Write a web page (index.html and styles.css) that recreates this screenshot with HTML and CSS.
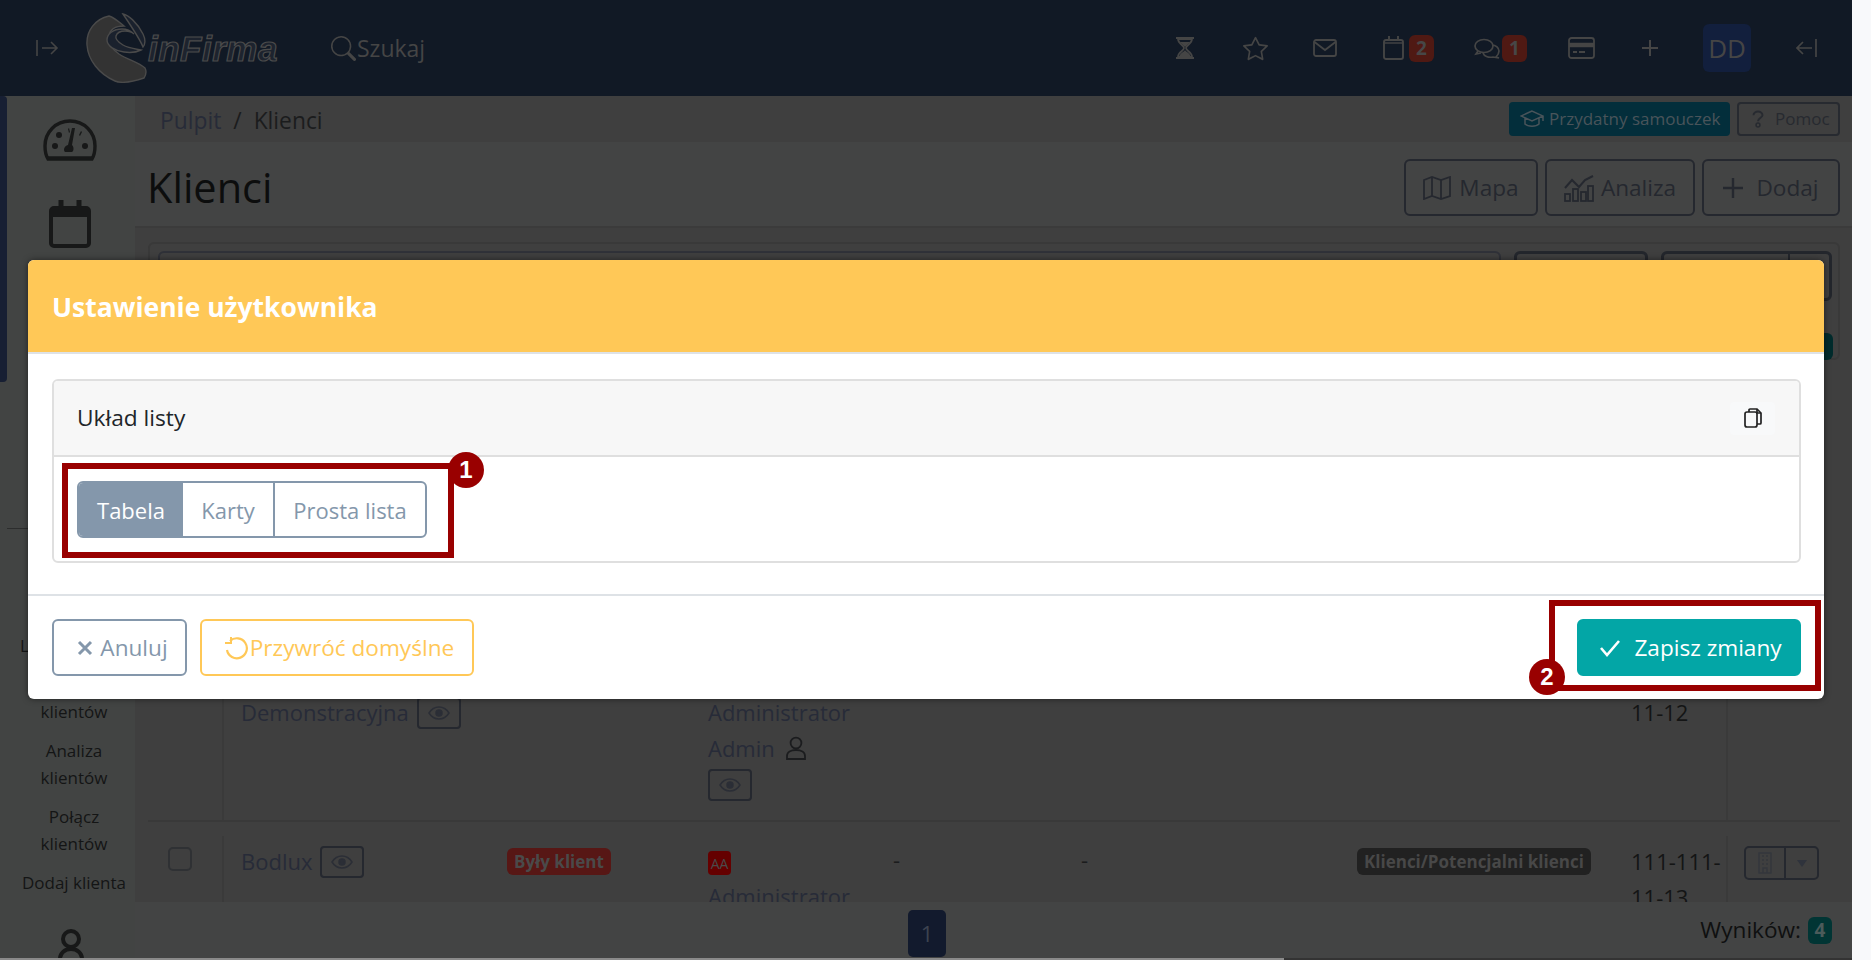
FILE: index.html
```html
<!DOCTYPE html>
<html lang="pl">
<head>
    <meta charset="UTF-8">
    <title>Klienci - inFirma</title>
    <link rel="stylesheet" href="styles.css">
</head>
<body>
<div class="page">
    <div class="app">
        <header class="navbar">
            <svg class="nav-toggle" viewBox="0 0 24 18" fill="none" stroke="currentColor" stroke-width="1.6"><path d="M2 1v16M7 9h15M16 3l6 6-6 6"/></svg>
            <div class="logo">
                <svg class="logo-swoosh" viewBox="0 0 64 70">
                    <path d="M38 1c5 1 14 8 20 20 3 6 2 11 0 13-3-8-10-18-20-33z" fill="#1a212d" stroke="#4a4a4a" stroke-width="1.4"/>
                    <path d="M24 3C10 6 1 18 2 32c1 15 12 29 28 36 7 3 17 1 29-3 2-3 3-6 1-10-7-6-17-8-26-14-7-5-12-11-10-18 1-7 7-10 15-10C34 9 30 5 24 3z" fill="#333" stroke="#4a4a4a" stroke-width="1.4"/>
                    <path d="M37 16c-9 0-15 5-15 11 0 6 8 11 17 12 7 1 13 0 17-2-5-1-13-2-18-5-5-3-8-6-7-9 1-3 4-5 9-5 4 0 7 1 9 3-3-3-7-5-12-5z" fill="#1a212d" stroke="#4a4a4a" stroke-width="1.4"/>
                </svg>
                <span class="logo-text">inFirma</span>
            </div>
            <div class="nav-search">
                <svg width="25" height="25" viewBox="0 0 16 16" fill="currentColor"><path d="M11.742 10.344a6.5 6.5 0 1 0-1.397 1.398h-.001c.03.04.062.078.098.115l3.85 3.85a1 1 0 0 0 1.415-1.414l-3.85-3.85a1.007 1.007 0 0 0-.115-.1zM12 6.5a5.5 5.5 0 1 1-11 0 5.5 5.5 0 0 1 11 0z"/></svg>
                <span>Szukaj</span>
            </div>
            <div class="nav-icons">
                <svg class="ni ni-hour" viewBox="0 0 18 24"><path d="M0 1h18v2H0zM0 21h18v2H0z" fill="currentColor"/><path d="M2 3c0 5 6 6 6 9s-6 4-6 9h14c0-5-6-6-6-9s6-4 6-9z" fill="none" stroke="currentColor" stroke-width="1.8"/><path d="M4 6h10l-5 5zM3 21c1-4 5-5 6-7 1 2 5 3 6 7z" fill="currentColor"/></svg>
                <svg class="ni ni-star" viewBox="0 0 16 16" fill="currentColor"><path d="M2.866 14.85c-.078.444.36.791.746.593l4.39-2.256 4.389 2.256c.386.198.824-.149.746-.592l-.83-4.73 3.522-3.356c.33-.314.16-.888-.282-.95l-4.898-.696L8.465.792a.513.513 0 0 0-.927 0L5.354 5.12l-4.898.696c-.441.062-.612.636-.283.95l3.523 3.356-.83 4.73zm4.905-2.767-3.686 1.894.694-3.957a.565.565 0 0 0-.163-.505L1.71 6.745l4.052-.576a.525.525 0 0 0 .393-.288L8 2.223l1.847 3.658a.525.525 0 0 0 .393.288l4.052.575-2.906 2.77a.565.565 0 0 0-.163.506l.694 3.957-3.686-1.894a.503.503 0 0 0-.461 0z"/></svg>
                <svg class="ni ni-mail" viewBox="0 0 24 18" fill="none" stroke="currentColor" stroke-width="1.8"><rect x="1" y="1" width="22" height="16" rx="2"/><path d="M1.5 3l10.5 8 10.5-8"/></svg>
                <div class="ni-badged">
                    <svg class="ni ni-cal" viewBox="0 0 21 24" fill="none" stroke="currentColor" stroke-width="1.9"><rect x="1" y="4" width="19" height="19" rx="2"/><path d="M1 7h19" stroke-width="1.4"/><path d="M6 0v5M15 0v5"/></svg>
                    <span class="nav-badge">2</span>
                </div>
                <div class="ni-badged ni-badged-chat">
                    <svg class="ni ni-chat" viewBox="0 0 27 21" fill="none" stroke="currentColor" stroke-width="1.7"><ellipse cx="10" cy="8" rx="9" ry="6.5"/><path d="M4 13l-2 3 5-1"/><path d="M18 7c4 0 7 3 7 6s-2 5-3 6l3 1-6-1c-5 1-9-1-10-4"/></svg>
                    <span class="nav-badge">1</span>
                </div>
                <svg class="ni ni-card" viewBox="0 0 27 22" fill="none" stroke="currentColor" stroke-width="1.8"><rect x="1" y="1" width="25" height="20" rx="2.5"/><path d="M1 8h25" stroke-width="4.5"/><path d="M5 15h4M11 15h6" stroke-width="2.2"/></svg>
                <svg class="ni ni-plus" viewBox="0 0 18 18" fill="none" stroke="currentColor" stroke-width="2"><path d="M9 1v16M1 9h16"/></svg>
                <div class="avatar">DD</div>
                <svg class="ni ni-back" viewBox="0 0 21 18" fill="none" stroke="currentColor" stroke-width="1.7"><path d="M20 0v18M16 9H1M7 3L1 9l6 6"/></svg>
            </div>
        </header>

        <div class="workspace">
            <aside class="sidebar">
                <div class="side-thumb"></div>
                <div class="side-rail">
                    <svg class="side-gauge" viewBox="0 0 54 42"><path d="M5 40C2 35 2 31 2 27 2 13 13 2 27 2s25 11 25 25c0 4 0 8-3 13z" fill="none" stroke="currentColor" stroke-width="3.4"/><path d="M4 39h46" stroke="currentColor" stroke-width="3.6"/><circle cx="12" cy="27" r="3" fill="currentColor"/><circle cx="16" cy="16" r="3" fill="currentColor"/><circle cx="42" cy="27" r="3" fill="currentColor"/><path d="M25 10l1-1 1 4-1 1zM38 12l1 1-2 4-1-1z" fill="currentColor"/><path d="M32 9l-3 17c2 2 2 6 0 7h-7c-2-2-1-6 3-7l4-17z" fill="currentColor"/></svg>
                    <svg class="side-cal" viewBox="0 0 42 48" fill="none" stroke="currentColor"><rect x="2" y="8" width="38" height="38" rx="3" stroke-width="4"/><path d="M2 13h38" stroke-width="8"/><path d="M12 0v10M30 0v10" stroke-width="5"/></svg>
                    <hr class="side-rule">
                    <nav class="side-links">
                        <a>Lista klientów</a>
                        <a>Grupy<br>klientów</a>
                        <a>Analiza<br>klientów</a>
                        <a>Połącz<br>klientów</a>
                        <a>Dodaj klienta</a>
                    </nav>
                    <svg class="side-user" viewBox="0 0 26 40" fill="none" stroke="currentColor" stroke-width="4"><circle cx="13" cy="10" r="8"/><path d="M2 36v-6c0-6 5-10 11-10s11 4 11 10v6"/></svg>
                </div>
            </aside>

            <main class="main">
                <div class="crumbs">
                    <div class="crumb-path"><a>Pulpit</a><span class="crumb-sep">/</span><span>Klienci</span></div>
                    <a class="btn-tutorial">
                        <svg width="24" height="20" viewBox="0 0 24 20" fill="none" stroke="currentColor" stroke-width="1.5"><path d="M12 2L1 7l11 5 11-5zM5 9v6c3 3 11 3 14 0V9M23 7v5"/></svg>
                        Przydatny samouczek
                    </a>
                    <a class="btn-help">
                        <svg width="12" height="20" viewBox="0 0 16 24" fill="none" stroke="currentColor" stroke-width="2.6"><path d="M2 7c0-3 3-5 6-5s6 2 6 5-6 4-6 8"/><circle cx="8" cy="20" r="2.6" stroke-width="2"/></svg>
                        Pomoc
                    </a>
                </div>

                <div class="titlebar">
                    <h1>Klienci</h1>
                    <div class="title-actions">
                        <a class="btn-line btn-mapa">
                            <svg width="28" height="24" viewBox="0 0 28 24" fill="none" stroke="currentColor" stroke-width="1.8"><path d="M1 4l8-3 9 3 9-3v19l-9 3-9-3-8 3zM9 1v19M18 4v19"/></svg>
                            Mapa
                        </a>
                        <a class="btn-line btn-analiza">
                            <svg width="30" height="28" viewBox="0 0 30 28"><path d="M1 14L8 6l7 7 6-7 8-4" fill="none" stroke="currentColor" stroke-width="2"/><g fill="none" stroke="currentColor" stroke-width="1.8"><rect x="1" y="20" width="5" height="7"/><rect x="9" y="15" width="5" height="12"/><rect x="17" y="18" width="5" height="9"/><rect x="24" y="12" width="5" height="15"/></g></svg>
                            Analiza
                        </a>
                        <a class="btn-line btn-dodaj">
                            <svg width="20" height="20" viewBox="0 0 20 20" fill="none" stroke="currentColor" stroke-width="2.4"><path d="M10 0v20M0 10h20"/></svg>
                            Dodaj
                        </a>
                    </div>
                </div>

                <div class="list-area">
                    <div class="filter-card">
                        <div class="filter-row">
                            <div class="filter-input"></div>
                            <div class="filter-btn"></div>
                            <div class="filter-split"><span></span><span></span></div>
                        </div>
                        <div class="filter-tag"></div>
                    </div>

                    <div class="client-table">
                        <div class="client-row client-row-first">
                            <div></div>
                            <div class="cell-name"><a>Demonstracyjna</a><span class="eye-btn"><svg width="22" height="16" viewBox="0 0 22 16" fill="none" stroke="currentColor" stroke-width="1.5"><path d="M1 8c5-8 15-8 20 0-5 8-15 8-20 0z"/><circle cx="11" cy="8" r="3" fill="currentColor"/></svg></span></div>
                            <div></div>
                            <div class="cell-owner">
                                <a>Administrator</a>
                                <div class="owner-line"><a>Admin</a><svg width="22" height="24" viewBox="0 0 22 24" fill="none" stroke="#1b1c1e" stroke-width="1.8"><circle cx="11" cy="7" r="5.4"/><path d="M2 23v-3c0-4 4-6 9-6s9 2 9 6v3z"/></svg></div>
                                <span class="eye-btn"><svg width="22" height="16" viewBox="0 0 22 16" fill="none" stroke="currentColor" stroke-width="1.5"><path d="M1 8c5-8 15-8 20 0-5 8-15 8-20 0z"/><circle cx="11" cy="8" r="3" fill="currentColor"/></svg></span>
                            </div>
                            <div></div>
                            <div></div>
                            <div></div>
                            <div class="cell-phone">11-12</div>
                            <div></div>
                        </div>
                        <div class="client-row client-row-second">
                            <div><span class="row-check"></span></div>
                            <div class="cell-name"><a>Bodlux</a><span class="eye-btn"><svg width="22" height="16" viewBox="0 0 22 16" fill="none" stroke="currentColor" stroke-width="1.5"><path d="M1 8c5-8 15-8 20 0-5 8-15 8-20 0z"/><circle cx="11" cy="8" r="3" fill="currentColor"/></svg></span></div>
                            <div><span class="tag tag-red">Były klient</span></div>
                            <div class="cell-owner"><span class="tag-aa">AA</span><a>Administrator</a></div>
                            <div class="cell-dash">-</div>
                            <div class="cell-dash">-</div>
                            <div><span class="tag tag-dark">Klienci/Potencjalni klienci</span></div>
                            <div class="cell-phone">111-111-<br>11-13</div>
                            <div>
                                <span class="row-actions">
                                    <span><svg width="14" height="22" viewBox="0 0 14 22" fill="none" stroke="#34373d" stroke-width="1.4"><rect x="1" y="1" width="12" height="20"/><path d="M4 4h2M8 4h2M4 8h2M8 8h2M4 12h2M8 12h2M5 21v-5h4v5"/></svg></span>
                                    <span><i class="caret"></i></span>
                                </span>
                            </div>
                        </div>
                    </div>
                </div>

                <div class="pager">
                    <span class="page-no">1</span>
                    <div class="results">Wyników: <span class="results-count">4</span></div>
                </div>
            </main>
        </div>
        <div class="hscroll"><span></span></div>
    </div>
    <div class="vscroll"></div>

    <section class="modal">
        <div class="modal-head">Ustawienie użytkownika</div>
        <div class="modal-body">
            <div class="panel">
                <div class="panel-head">
                    <span>Układ listy</span>
                    <span class="copy-btn">
                        <svg width="18" height="20" viewBox="0 0 18 20" fill="none" stroke="#222" stroke-width="1.7"><path d="M5 4V2a1 1 0 0 1 1-1h7l4 4v10a1 1 0 0 1-1 1h-3"/><path d="M13 1v4h4"/><rect x="1" y="4" width="12" height="15" rx="2"/></svg>
                    </span>
                </div>
                <div class="panel-body">
                    <div class="layout-group">
                        <span class="layout-opt layout-active">Tabela</span>
                        <span class="layout-opt">Karty</span>
                        <span class="layout-opt">Prosta lista</span>
                    </div>
                </div>
            </div>
        </div>
        <div class="modal-foot">
            <a class="btn btn-cancel">
                <svg width="16" height="16" viewBox="0 0 16 16" fill="none" stroke="currentColor" stroke-width="3"><path d="M2 2l12 12M14 2L2 14"/></svg>
                Anuluj
            </a>
            <a class="btn btn-reset">
                <svg width="24" height="24" viewBox="0 0 24 24" fill="none" stroke="currentColor" stroke-width="2.2"><path d="M6 5a10 10 0 1 1-3 9"/><path d="M7 1v6H1" stroke-width="2"/></svg>
                Przywróć domyślne
            </a>
            <a class="btn btn-save">
                <svg width="22" height="18" viewBox="0 0 22 18" fill="none" stroke="currentColor" stroke-width="2.6"><path d="M2 9l6 7L20 2"/></svg>
                Zapisz zmiany
            </a>
        </div>

        <div class="mark-box mark-box-one"></div>
        <span class="mark-dot mark-dot-one">1</span>
        <div class="mark-box mark-box-two"></div>
        <span class="mark-dot mark-dot-two">2</span>
    </section>
</div>
</body>
</html>
```

FILE: styles.css
```css
:root {
    --nav: #111925;
    --nav-fg: #454545;
    --line-dark: #25282f;
    --link-dark: #272b38;
    --text-dark: #111212;
    --slate: #8497ab;
    --amber: #ffc857;
    --teal: #03a6a6;
    --mark: #990000;
}

* {
    margin: 0;
    padding: 0;
    box-sizing: border-box;
}

html, body {
    height: 100%;
    overflow: hidden;
}

body {
    font-family: "Open Sans", "Noto Sans", sans-serif;
    font-size: 22px;
    line-height: 36px;
    color: var(--text-dark);
}

.page {
    position: relative;
    width: 1871px;
    height: 960px;
    display: flex;
    overflow: hidden;
}

.app {
    width: 1852px;
    display: flex;
    flex-direction: column;
    background: #3f3f3f;
}

.vscroll {
    width: 19px;
    background: #f8f9fb;
}

.hscroll {
    height: 2px;
    background: #333;
}

.hscroll span {
    display: block;
    width: 1284px;
    height: 2px;
    background: #8a8a8a;
}

/* top bar */
.navbar {
    height: 96px;
    flex: none;
    display: flex;
    align-items: center;
    padding-left: 35px;
    background: var(--nav);
    color: var(--nav-fg);
}

.nav-toggle {
    width: 24px;
    height: 18px;
}

.logo {
    display: flex;
    align-items: center;
    margin-left: 26px;
    width: 192px;
    height: 70px;
}

.logo-swoosh {
    width: 64px;
    height: 70px;
    flex: none;
}

.logo-text {
    font-family: "Liberation Sans", sans-serif;
    font-size: 35px;
    font-weight: 700;
    font-style: italic;
    color: #1d232e;
    -webkit-text-stroke: 1.2px #4b4b4b;
    margin-left: -1px;
    margin-top: 1px;
    letter-spacing: 0.5px;
}

.nav-search {
    display: flex;
    align-items: center;
    gap: 1px;
    margin-left: 54px;
    font-size: 23px;
}

.nav-icons {
    margin-left: auto;
    display: flex;
    align-items: center;
    padding-right: 35px;
}

.ni {
    flex: none;
    display: block;
}

.ni-hour { width: 18px; height: 24px; margin-right: 49px; }
.ni-star { width: 25px; height: 25px; margin-right: 45px; }
.ni-mail { width: 24px; height: 18px; margin-right: 46px; }
.ni-cal { width: 21px; height: 24px; }
.ni-chat { width: 27px; height: 21px; }
.ni-card { width: 27px; height: 22px; margin-right: 46px; }
.ni-plus { width: 18px; height: 18px; margin-right: 44px; }
.ni-back { width: 21px; height: 18px; }

.ni-badged {
    display: flex;
    align-items: center;
    gap: 5px;
    margin-right: 40px;
}

.ni-badged-chat {
    gap: 1px;
    margin-right: 41px;
}

.nav-badge {
    width: 25px;
    height: 27px;
    border-radius: 6px;
    background: #4f1913;
    color: #474747;
    font-size: 19px;
    font-weight: 700;
    line-height: 27px;
    text-align: center;
}

.avatar {
    width: 48px;
    height: 48px;
    margin-right: 45px;
    border-radius: 6px;
    background: #121f3d;
    font-size: 26px;
    line-height: 48px;
    text-align: center;
}

/* left rail */
.workspace {
    flex: 1;
    min-height: 0;
    display: flex;
}

.sidebar {
    width: 135px;
    flex: none;
    display: flex;
    background: #424443;
    overflow: hidden;
}

.side-thumb {
    width: 7px;
    height: 286px;
    flex: none;
    border-radius: 0 4px 4px 0;
    background: #171f33;
}

.side-rail {
    flex: 1;
    display: flex;
    flex-direction: column;
    align-items: center;
    padding-top: 23px;
    padding-right: 1px;
    color: #171818;
}

.side-gauge {
    width: 54px;
    height: 42px;
    flex: none;
    margin-right: 2px;
}

.side-cal {
    width: 42px;
    height: 48px;
    flex: none;
    margin-top: 39px;
    margin-right: 2px;
}

.side-rule {
    width: 100%;
    margin-top: 280px;
    border: 0;
    border-top: 1px solid #2c2d2d;
}

.side-links {
    margin: 103px 0 0 7px;
    display: flex;
    flex-direction: column;
    flex: none;
    gap: 12px;
    font-size: 17px;
    line-height: 27px;
    text-align: center;
    color: #141515;
}

.side-user {
    width: 26px;
    height: 40px;
    flex: none;
    margin-top: 33px;
}

/* main column */
.main {
    flex: 1;
    min-width: 0;
    display: flex;
    flex-direction: column;
}

.crumbs {
    height: 46px;
    flex: none;
    display: flex;
    align-items: center;
    padding: 0 12px 0 25px;
    gap: 7px;
    background: #3f3f3f;
}

.crumb-path {
    margin: 3px auto 0 0;
    font-size: 22.8px;
    color: #1b1c1d;
}

.crumb-path a {
    color: var(--link-dark);
}

.crumb-sep {
    margin: 0 12px;
}

.btn-tutorial, .btn-help {
    height: 34px;
    display: flex;
    align-items: center;
    border-radius: 4px;
    font-size: 17px;
    line-height: 30px;
    white-space: nowrap;
}

.btn-tutorial {
    width: 221px;
    padding-left: 11px;
    gap: 5px;
    background: #032e3b;
    color: #49545a;
}

.btn-help {
    width: 103px;
    padding-left: 13px;
    gap: 11px;
    border: 2px solid #272a30;
    color: #272a30;
}

.titlebar {
    height: 86px;
    flex: none;
    display: flex;
    align-items: center;
    justify-content: space-between;
    padding: 0 12px 0 12px;
    background: #434444;
    border-bottom: 2px solid #3b3b3b;
}

h1 {
    margin-top: 5px;
    font-size: 41.5px;
    font-weight: 400;
    line-height: 58px;
    color: #0c0d0d;
}

.title-actions {
    display: flex;
    gap: 7px;
    margin-top: 7px;
}

.btn-line {
    height: 57px;
    display: flex;
    align-items: center;
    justify-content: center;
    border: 2px solid var(--line-dark);
    border-radius: 6px;
    font-size: 22.6px;
    color: var(--line-dark);
}

.btn-mapa { width: 134px; gap: 8px; }
.btn-analiza { width: 150px; gap: 7px; }
.btn-dodaj { width: 138px; gap: 13px; }

.list-area {
    flex: 1;
    min-height: 0;
    display: flex;
    flex-direction: column;
    justify-content: space-between;
    padding: 14px 12px 0 13px;
    overflow: hidden;
}

.filter-card {
    height: 118px;
    padding: 7px 6px 7px 8px;
    border: 2px solid #393939;
    border-radius: 6px;
    position: relative;
}

.filter-row {
    display: flex;
    gap: 13px;
}

.filter-input {
    flex: 1;
    height: 50px;
    border: 2px solid #2f3138;
    border-radius: 6px;
}

.filter-btn {
    width: 134px;
    height: 50px;
    border: 3px solid #23262c;
    border-radius: 6px;
}

.filter-split {
    width: 171px;
    height: 50px;
    display: flex;
    border: 3px solid #23262c;
    border-radius: 6px;
}

.filter-split span:first-child {
    flex: 1;
    border-right: 2px solid #23262c;
}

.filter-split span:last-child {
    width: 39px;
}

/* badge peeking out from under the dialog */
.filter-tag {
    position: absolute;
    top: 89px;
    right: 5px;
    width: 60px;
    height: 27px;
    border-radius: 6px;
    background: #002b2c;
}

.client-table {
    flex: none;
}

.client-row {
    display: grid;
    grid-template-columns: 74px 285px 201px 187px 188px 274px 274px 95px 114px;
    overflow: hidden;
    color: #1b1c1d;
}

.client-row a {
    color: var(--link-dark);
}

.client-row > div:nth-child(2),
.client-row > div:nth-child(9) {
    border-left: 2px solid #3a3a3a;
}

.client-row-first {
    height: 160px;
    padding-top: 32px;
    border-bottom: 2px solid #393939;
}

.client-row-second {
    height: 80px;
    padding-top: 14px;
}

.cell-name {
    display: flex;
    align-items: flex-start;
    gap: 8px;
    padding-left: 17px;
}

.cell-owner {
    display: flex;
    flex-direction: column;
    align-items: flex-start;
}

.owner-line {
    display: flex;
    align-items: center;
    gap: 10px;
}

.eye-btn {
    width: 44px;
    height: 32px;
    display: flex;
    align-items: center;
    justify-content: center;
    flex: none;
    margin-top: 3px;
    border: 2px solid var(--line-dark);
    border-radius: 4px;
    color: #2b2e36;
}

.client-row-second .eye-btn {
    margin-top: 10px;
}

.client-row-second .cell-name a {
    margin-top: 7px;
}

.row-check {
    display: block;
    width: 24px;
    height: 24px;
    margin: 11px 0 0 20px;
    border: 2px solid #2f3134;
    border-radius: 5px;
}

.tag {
    display: inline-block;
    height: 27px;
    padding: 0 7px;
    margin-top: 12px;
    border-radius: 6px;
    font-size: 17px;
    font-weight: 700;
    line-height: 27px;
    white-space: nowrap;
}

.tag-red {
    background: #571715;
    color: #4a4a4a;
}

.tag-dark {
    background: #212121;
    color: #484848;
}

.tag-aa {
    display: block;
    width: 23px;
    height: 24px;
    margin-top: 15px;
    margin-bottom: 3px;
    border-radius: 4px;
    background: #650000;
    color: #4a4a4a;
    font-size: 14px;
    line-height: 26px;
    text-align: center;
}

.cell-dash {
    margin-left: -2px;
    padding-top: 5px;
}

.cell-phone {
    white-space: nowrap;
    padding-top: 0;
    color: #141515;
}

.client-row-second .cell-phone {
    padding-top: 7px;
}

.row-actions {
    display: flex;
    width: 75px;
    height: 34px;
    margin: 10px 0 0 16px;
    border: 2px solid var(--line-dark);
    border-radius: 5px;
}

.row-actions span {
    display: flex;
    align-items: center;
    justify-content: center;
}

.row-actions span:first-child {
    flex: 1;
    border-right: 2px solid var(--line-dark);
}

.row-actions span:last-child {
    width: 31px;
}

.caret {
    border: 5px solid transparent;
    border-top: 7px solid #2f333c;
    margin-top: 6px;
}

.pager {
    height: 56px;
    flex: none;
    display: flex;
    align-items: center;
    justify-content: space-between;
    padding: 0 20px 0 773px;
    background: #434444;
}

.page-no {
    width: 38px;
    height: 47px;
    margin-top: 6px;
    border-radius: 5px;
    background: #121a2d;
    color: #3d4350;
    line-height: 47px;
    text-align: center;
}

.results {
    display: flex;
    align-items: center;
    gap: 7px;
    font-size: 22.6px;
    color: #0f1010;
}

.results-count {
    width: 24px;
    height: 27px;
    border-radius: 6px;
    background: #013534;
    color: #4b5b5a;
    font-size: 19px;
    font-weight: 700;
    line-height: 27px;
    text-align: center;
}

/* dialog */
.modal {
    position: absolute;
    left: 28px;
    top: 260px;
    width: 1796px;
    height: 439px;
    display: flex;
    flex-direction: column;
    border-radius: 6px;
    background: #fff;
    box-shadow: 0 0 6px rgba(0, 0, 0, 0.5);
    color: #212529;
}

.modal-head {
    height: 94px;
    flex: none;
    padding: 2px 0 0 24px;
    border-radius: 6px 6px 0 0;
    border-bottom: 2px solid #dee2e6;
    background: var(--amber);
    color: #fff;
    font-size: 26.5px;
    font-weight: 700;
    line-height: 90px;
}

.modal-body {
    height: 240px;
    flex: none;
    padding: 25px 23px 0 24px;
}

.panel {
    height: 184px;
    border: 2px solid #dfdfdf;
    border-radius: 6px;
}

.panel-head {
    height: 76px;
    display: flex;
    align-items: center;
    justify-content: space-between;
    padding: 0 24px 0 23px;
    background: #f7f7f7;
    border-bottom: 2px solid #dfdfdf;
    border-radius: 4px 4px 0 0;
    font-size: 22.7px;
}

.copy-btn {
    width: 45px;
    height: 33px;
    display: flex;
    align-items: center;
    justify-content: center;
    border-radius: 4px;
    background: #f8f9fa;
}

.panel-body {
    padding: 24px 0 0 23px;
}

.layout-group {
    display: inline-flex;
    height: 57px;
    border: 2px solid var(--slate);
    border-radius: 6px;
    overflow: hidden;
    color: var(--slate);
}

.layout-opt {
    display: flex;
    align-items: center;
    justify-content: center;
}

.layout-opt:nth-child(1) { width: 104px; }
.layout-opt:nth-child(2) { width: 92px; border-right: 2px solid var(--slate); }
.layout-opt:nth-child(3) { width: 150px; }

.layout-active {
    background: var(--slate);
    color: #fff;
}

.modal-foot {
    flex: 1;
    display: flex;
    align-items: center;
    gap: 13px;
    padding: 0 23px 0 24px;
    border-top: 2px solid #dee2e6;
    font-size: 22.6px;
}

.btn {
    height: 57px;
    display: flex;
    align-items: center;
    justify-content: center;
    border-radius: 6px;
    border: 2px solid;
}

.btn-cancel {
    width: 135px;
    gap: 7px;
    padding-left: 6px;
    border-color: var(--slate);
    color: var(--slate);
}

.btn-reset {
    width: 274px;
    gap: 2px;
    padding-left: 4px;
    border-color: var(--amber);
    color: var(--amber);
}

.btn-save {
    width: 224px;
    gap: 13px;
    padding-left: 3px;
    margin-left: auto;
    border-color: var(--teal);
    background: var(--teal);
    color: #fff;
}

/* tutorial markers on top of the dialog */
.mark-box {
    position: absolute;
    border: 6px solid var(--mark);
}

.mark-box-one {
    left: 34px;
    top: 203px;
    width: 392px;
    height: 95px;
}

.mark-box-two {
    left: 1521px;
    top: 340px;
    width: 272px;
    height: 91px;
}

.mark-dot {
    position: absolute;
    width: 36px;
    height: 36px;
    border-radius: 50%;
    background: var(--mark);
    color: #fff;
    font-family: "Liberation Sans", sans-serif;
    font-size: 24px;
    font-weight: 700;
    line-height: 36px;
    text-align: center;
}

.mark-dot-one {
    left: 420px;
    top: 192px;
}

.mark-dot-two {
    left: 1501px;
    top: 399px;
}
```
